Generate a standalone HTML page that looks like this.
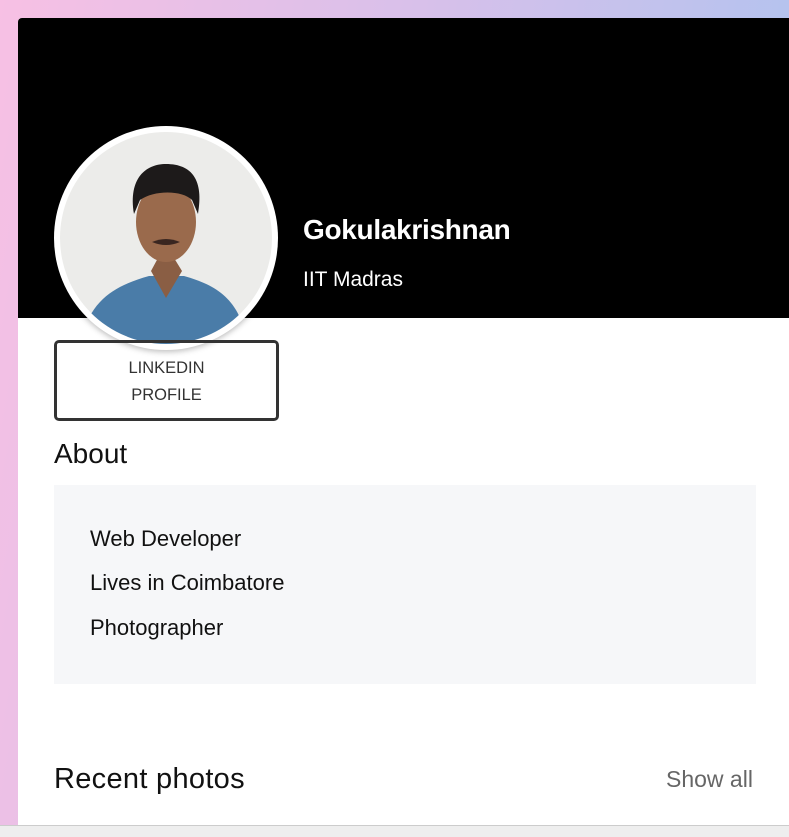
<!DOCTYPE html>
<html><head><style>
*{margin:0;padding:0;box-sizing:border-box}
body{width:789px;height:837px;overflow:hidden;background:linear-gradient(100deg,#f7c0e4 0%,#d8c0ea 45%,#a8c4f0 100%);font-family:"Liberation Sans",sans-serif;position:relative}
.card{position:absolute;left:18px;top:18px;width:790px;height:808px;background:#fff;border-radius:4px 0 0 0;overflow:hidden}
.hdr{position:absolute;left:0;top:0;width:100%;height:300px;background:#000}
.av{position:absolute;left:36px;top:108px;width:224px;height:224px;border-radius:50%;background:#fff;box-shadow:0 2px 6px rgba(0,0,0,.25)}
.name{position:absolute;left:285px;top:196px;color:#fff;font-size:28px;font-weight:bold;letter-spacing:-.3px}
.sub{position:absolute;left:285px;top:250px;color:#fff;font-size:21px}
.btn{position:absolute;left:36px;top:322px;width:225px;height:81px;border:3px solid #333;border-radius:5px;text-align:center;font-size:16.5px;line-height:27px;color:#333;padding-top:12px}
.about{position:absolute;left:36px;top:420px;font-size:28px;color:#111}
.box{position:absolute;left:36px;top:467px;width:702px;height:199px;background:#f6f7f9}
.box p{position:absolute;left:36px;font-size:22px;color:#111}
.rp{position:absolute;left:36px;top:745px;font-size:29px;color:#111;letter-spacing:.3px}
.sa{position:absolute;left:648px;top:748px;font-size:23px;color:#666}
.foot{position:absolute;left:0;top:825px;width:789px;height:12px;background:#eee;border-top:1px solid #ccc}
</style></head><body>
<div class="card">
<div class="hdr"></div>
<div class="av"><svg width="224" height="224" viewBox="0 0 224 224" style="position:absolute;left:0;top:0">
<defs><clipPath id="c"><circle cx="112" cy="112" r="106"/></clipPath></defs>
<g clip-path="url(#c)">
<rect width="224" height="224" fill="#ececea"/>
<path d="M25 230 C30 175 60 160 95 150 L130 150 C165 160 190 175 195 230Z" fill="#4a7ca8"/>
<path d="M97 145 L112 172 L128 145 L120 132 L104 132Z" fill="#8a5e44"/>
<ellipse cx="112" cy="96" rx="30" ry="40" fill="#9a6a4c"/>
<path d="M80 88 C74 52 92 38 112 38 C138 38 150 54 144 88 L138 74 C128 64 100 64 86 74Z" fill="#1d1a1a"/>
<path d="M98 116 Q112 110 126 116 Q112 122 98 116Z" fill="#3a2620"/>
</g></svg></div>
<div class="name">Gokulakrishnan</div>
<div class="sub">IIT Madras</div>
<div class="btn">LINKEDIN<br>PROFILE</div>
<div class="about">About</div>
<div class="box"><p style="top:41px">Web Developer</p><p style="top:85px">Lives in Coimbatore</p><p style="top:130px">Photographer</p></div>
<div class="rp">Recent photos</div>
<div class="sa">Show all</div>
</div>
<div class="foot"></div>
</body></html>
